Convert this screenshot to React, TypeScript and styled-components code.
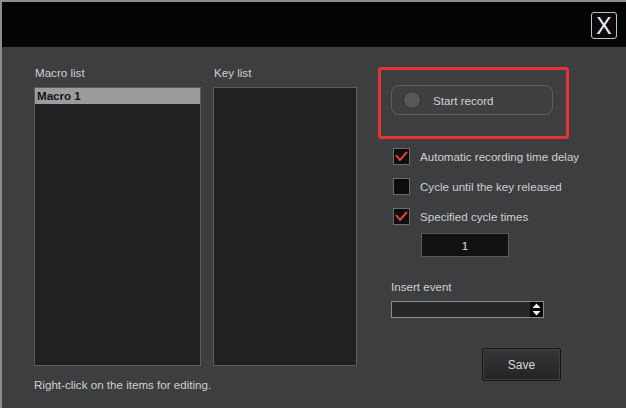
import React from 'react';
import styled, { createGlobalStyle } from 'styled-components';

const GlobalStyle = createGlobalStyle`
  html, body {
    margin: 0;
    padding: 0;
    background: #3d3e40;
  }
  body {
    font-family: 'Liberation Sans', Arial, sans-serif;
  }
`;

const Window = styled.div`
  width: 624px;
  height: 406px;
  border-top: 2px solid #8d8d8f;
  border-left: 2px solid #8d8d8f;
  background: #3d3e40;
  display: flex;
  flex-direction: column;
  overflow: hidden;
`;

const TitleBar = styled.div`
  height: 45px;
  background: #050505;
  display: flex;
  align-items: center;
  justify-content: flex-end;
  padding-right: 9px;
  flex-shrink: 0;
`;

const CloseButton = styled.button`
  width: 26px;
  height: 27px;
  padding: 0;
  margin-top: 2px;
  border: 1.5px solid #c4c4c4;
  border-radius: 3px;
  background: #0a0a0a;
  color: #f2f2f2;
  font-family: 'Liberation Sans', Arial, sans-serif;
  font-size: 23px;
  line-height: 24px;
  cursor: pointer;
`;

const Body = styled.div`
  flex: 1;
  display: flex;
  padding-left: 32px;
`;

const LeftPane = styled.div`
  display: flex;
  flex-direction: column;
  padding-top: 19px;
`;

const Columns = styled.div`
  display: flex;
  gap: 12px;
`;

const Column = styled.div<{ $width: number }>`
  width: ${(p) => p.$width}px;
  display: flex;
  flex-direction: column;
  gap: 7px;
`;

const Label = styled.div`
  color: #cfd0d2;
  font-size: 11.6px;
  line-height: 14px;
  padding-left: 1px;
`;

const ListBox = styled.div`
  height: 277px;
  background: #202122;
  border: 1px solid #5c5d5f;
`;

const ListItem = styled.div<{ $selected?: boolean }>`
  height: 16px;
  line-height: 16px;
  padding-left: 2px;
  font-size: 11.6px;
  font-weight: bold;
  color: #151515;
  background: ${(p) => (p.$selected ? '#9c9c9f' : 'transparent')};
`;

const Footer = styled.div`
  color: #cfd0d2;
  font-size: 11.6px;
  line-height: 14px;
  margin-top: 12px;
`;

const RightPane = styled.div`
  margin-left: 21px;
  padding-top: 20px;
  display: flex;
  flex-direction: column;
`;

const Highlight = styled.div`
  width: 191px;
  height: 72px;
  box-sizing: border-box;
  border: 3.5px solid #e5332f;
  border-radius: 3px;
  padding: 15px 0 0 10px;
`;

const RecordButton = styled.button`
  width: 162px;
  height: 30px;
  box-sizing: border-box;
  border: 1px solid #5f6062;
  border-radius: 8px;
  background: #3f4042;
  display: flex;
  align-items: center;
  gap: 12px;
  padding: 0 0 0 11px;
  color: #d2d3d5;
  font-family: 'Liberation Sans', Arial, sans-serif;
  font-size: 11.6px;
  cursor: pointer;
`;

const RecordDot = styled.span`
  width: 18px;
  height: 18px;
  border-radius: 50%;
  background: #57585a;
  border: 1px solid #2e2f31;
  box-sizing: border-box;
`;

const Options = styled.div`
  margin-top: 9px;
  padding-left: 15px;
  display: flex;
  flex-direction: column;
  gap: 13px;
`;

const OptionRow = styled.label`
  display: flex;
  align-items: center;
  gap: 10px;
  height: 17px;
  color: #cfd0d2;
  font-size: 11.6px;
`;

const Box = styled.span`
  width: 17px;
  height: 17px;
  box-sizing: border-box;
  border: 1.5px solid #6b6c6e;
  background: #0d0d0d;
  display: flex;
  align-items: center;
  justify-content: center;
`;

const CountInput = styled.div`
  margin: 8px 0 0 43px;
  width: 88px;
  height: 24px;
  box-sizing: border-box;
  border: 1px solid #5a5b5d;
  background: #121212;
  color: #e0e0e0;
  font-size: 11.6px;
  display: flex;
  align-items: center;
  justify-content: center;
`;

const EventLabel = styled(Label)`
  margin: 23px 0 0 12px;
`;

const Select = styled.div`
  margin: 7px 0 0 13px;
  width: 153px;
  height: 17px;
  box-sizing: border-box;
  border: 1px solid #8a8b8d;
  background: #262728;
  display: flex;
  justify-content: flex-end;
`;

const SelectArrow = styled.span`
  width: 13px;
  background: #050505;
  display: flex;
  align-items: center;
  justify-content: center;
`;

const SaveButton = styled.button`
  margin: 30px 0 0 104px;
  width: 79px;
  height: 33px;
  border: 1px solid #151515;
  border-radius: 2px;
  background: linear-gradient(#363738, #2a2b2c 60%, #232425);
  box-shadow: inset 0 0 0 1px #3f4041;
  color: #d8d9db;
  font-family: 'Liberation Sans', Arial, sans-serif;
  font-size: 12px;
  cursor: pointer;
`;

const Check = () => (
  <svg width="13" height="11" viewBox="0 0 13 11">
    <polyline points="1,4 5,9 12,1" fill="none" stroke="#e8432f" strokeWidth="2" />
  </svg>
);

const Option = ({ checked, label }: { checked: boolean; label: string }) => (
  <OptionRow>
    <Box>{checked && <Check />}</Box>
    {label}
  </OptionRow>
);

const App = () => {
  const options = [
    { label: 'Automatic recording time delay', checked: true },
    { label: 'Cycle until the key released', checked: false },
    { label: 'Specified cycle times', checked: true },
  ];

  return (
    <>
      <GlobalStyle />
      <Window>
        <TitleBar>
          <CloseButton>X</CloseButton>
        </TitleBar>
        <Body>
          <LeftPane>
            <Columns>
              <Column $width={167}>
                <Label>Macro list</Label>
                <ListBox>
                  <ListItem $selected>Macro 1</ListItem>
                </ListBox>
              </Column>
              <Column $width={144}>
                <Label>Key list</Label>
                <ListBox />
              </Column>
            </Columns>
            <Footer>Right-click on the items for editing.</Footer>
          </LeftPane>
          <RightPane>
            <Highlight>
              <RecordButton>
                <RecordDot />
                Start record
              </RecordButton>
            </Highlight>
            <Options>
              {options.map((o) => (
                <Option key={o.label} label={o.label} checked={o.checked} />
              ))}
            </Options>
            <CountInput>1</CountInput>
            <EventLabel>Insert event</EventLabel>
            <Select>
              <SelectArrow>
                <svg width="9" height="13" viewBox="0 0 9 13">
                  <polygon points="4.5,0.5 8.5,5 0.5,5" fill="#f0f0f0" />
                  <polygon points="0.5,8 8.5,8 4.5,12.5" fill="#f0f0f0" />
                </svg>
              </SelectArrow>
            </Select>
            <SaveButton>Save</SaveButton>
          </RightPane>
        </Body>
      </Window>
    </>
  );
};

export default App;
